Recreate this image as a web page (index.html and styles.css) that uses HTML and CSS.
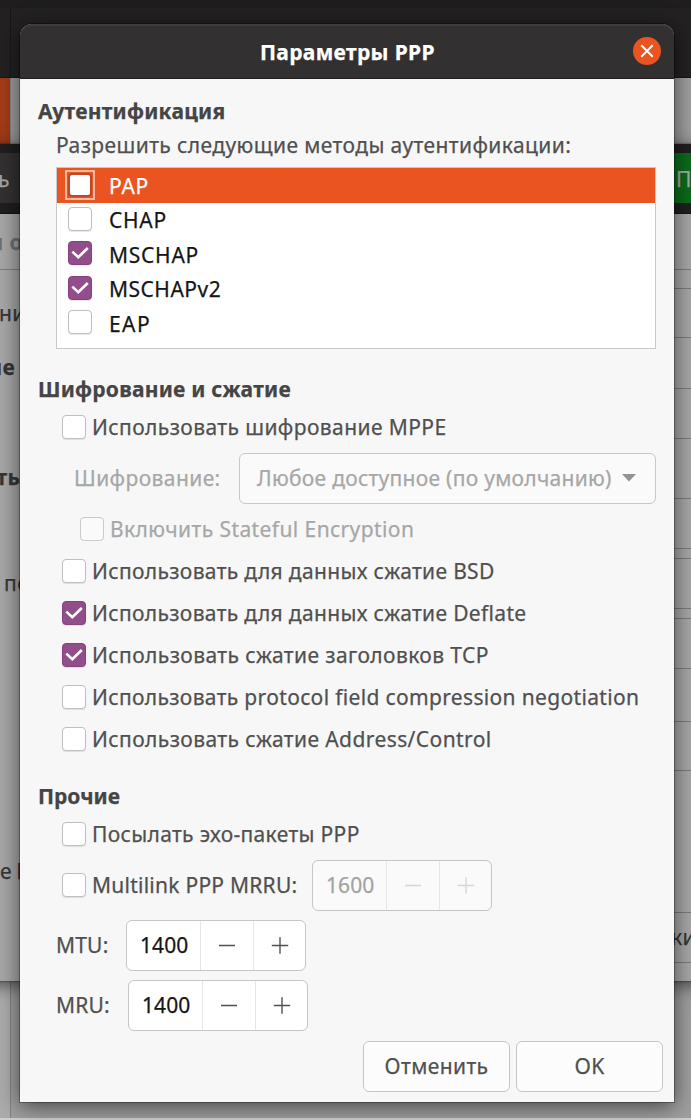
FILE: index.html
```
<!DOCTYPE html>
<html lang="ru">
<head>
<meta charset="utf-8">
<title>Параметры PPP</title>
<link rel="stylesheet" href="styles.css">
</head>
<body>
<svg class="defs" aria-hidden="true">
  <symbol id="tick" viewBox="0 0 24 24"><path d="M4.3 10.6 10.3 16.2 19.8 7" fill="none" stroke="#fff" stroke-width="2.6"/></symbol>
  <symbol id="minus" viewBox="0 0 18 18"><path d="M1 9.5H17" stroke="currentColor" stroke-width="1.4"/></symbol>
  <symbol id="plus" viewBox="0 0 18 18"><path d="M.8 9.5H17.2M9 1.3V17.7" stroke="currentColor" stroke-width="1.4"/></symbol>
</svg>
<div class="desktop">
  <div class="base">
    <div class="topbar"></div>
    <div class="base-head"><div class="base-head-left"></div></div>
    <div class="base-body">
      <div class="sidebar"><div class="selected"></div></div>
      <div class="base-content"></div>
    </div>
  </div>

  <div class="parent">
    <div class="parent-head">
      <div class="parent-cancel">ь</div>
      <div class="parent-apply">П</div>
    </div>
    <div class="parent-body">
      <div class="parent-left">
        <div class="tab">и о</div>
        <div class="bg-ni">ни</div>
        <div class="bg-ie"><b>ие</b></div>
        <div class="bg-it"><b>ить</b></div>
        <div class="bg-po">по</div>
        <div class="bg-el">е L</div>
      </div>
      <div class="parent-right">
        <div class="edge e1"></div>
        <div class="edge e2"></div>
        <div class="edge e3"></div>
        <div class="edge e4"></div>
        <div class="edge e5"></div>
        <div class="edge e6"></div>
        <div class="edge e7"></div>
        <div class="edge e8"></div>
        <div class="edge e9"></div>
        <div class="edge e10"></div>
        <div class="edge e11"></div>
        <div class="edge e12">ки</div>
      </div>
    </div>
  </div>

  <div class="dialog">
    <div class="titlebar">
      <div class="title">Параметры PPP</div>
      <svg class="close" viewBox="0 0 28 28"><circle cx="14" cy="14" r="14" fill="#e95420"/><path d="M8.3 8.3 19.7 19.7M19.7 8.3 8.3 19.7" stroke="#fff" stroke-width="2"/></svg>
    </div>
    <div class="content">
      <h2 class="h-auth">Аутентификация</h2>
      <div class="note">Разрешить следующие методы аутентификации:</div>
      <div class="list">
        <div class="item active"><span class="focus"><span class="box"></span></span><span class="name">PAP</span></div>
        <div class="item"><span class="box"></span><span class="name">CHAP</span></div>
        <div class="item"><span class="box on"><svg><use href="#tick"/></svg></span><span class="name">MSCHAP</span></div>
        <div class="item"><span class="box on"><svg><use href="#tick"/></svg></span><span class="name v2">MSCHAPv2</span></div>
        <div class="item"><span class="box"></span><span class="name eap">EAP</span></div>
      </div>

      <h2 class="h-enc">Шифрование и сжатие</h2>
      <div class="row"><span class="box"></span><span>Использовать шифрование MPPE</span></div>
      <div class="combo-row">
        <span>Шифрование:</span>
        <div class="combo"><span>Любое доступное (по умолчанию)</span><svg viewBox="0 0 14 8"><path d="M0 0H14L7 7.5Z" fill="#929292"/></svg></div>
      </div>
      <div class="row indent disabled"><span class="box"></span><span>Включить Stateful Encryption</span></div>
      <div class="row snug"><span class="box"></span><span>Использовать для данных сжатие BSD</span></div>
      <div class="row snug"><span class="box on"><svg><use href="#tick"/></svg></span><span>Использовать для данных сжатие Deflate</span></div>
      <div class="row"><span class="box on"><svg><use href="#tick"/></svg></span><span>Использовать сжатие заголовков TCP</span></div>
      <div class="row snug"><span class="box"></span><span>Использовать protocol field compression negotiation</span></div>
      <div class="row"><span class="box"></span><span>Использовать сжатие Address/Control</span></div>

      <h2 class="h-other">Прочие</h2>
      <div class="row snug"><span class="box"></span><span>Посылать эхо-пакеты PPP</span></div>
      <div class="row mrru">
        <span class="box"></span><span class="mrru-label">Multilink PPP MRRU:</span>
        <div class="spin off"><span>1600</span><i><svg><use href="#minus"/></svg></i><i><svg><use href="#plus"/></svg></i></div>
      </div>
      <div class="spin-row mtu"><span>MTU:</span>
        <div class="spin"><span>1400</span><i><svg><use href="#minus"/></svg></i><i><svg><use href="#plus"/></svg></i></div>
      </div>
      <div class="spin-row mru"><span>MRU:</span>
        <div class="spin"><span>1400</span><i><svg><use href="#minus"/></svg></i><i><svg><use href="#plus"/></svg></i></div>
      </div>
    </div>
    <div class="actions"><div class="btn">Отменить</div><div class="btn">OK</div></div>
  </div>
</div>
</body>
</html>
```
FILE: styles.css
```
* { box-sizing: border-box; }
body {
  margin: 0;
  font: 21px/30px "Noto Sans", sans-serif;
  letter-spacing: .41px;
  color: #505050;
  white-space: nowrap;
  -webkit-text-stroke: .25px currentColor;
}
.defs { display: none; }
.desktop { position: relative; width: 691px; height: 1120px; overflow: hidden; }

/* Main application window */
.base { height: 1120px; display: flex; flex-direction: column; background: #9f9f9f; border-bottom: 2px solid #cfcfcf; }
.topbar { height: 8px; background: #1e1e1e; }
.base-head { height: 70px; background: #232122; border-bottom: 1px solid #161415; }
.base-head-left { width: 11px; height: 69px; border-right: 1px solid #191718; }
.base-body { flex: 1; display: flex; }
.sidebar { width: 11px; background: #acacac; border-right: 1px solid #838383; }
.selected { height: 66px; background: #a53c17; }
.base-content { flex: 1; }

/* Connection editor window */
.parent {
  position: absolute; left: -40px; top: 144px; width: 771px; height: 837px;
  padding: 0 40px; background: #a7a7a7;
  box-shadow: 0 0 2px rgba(0,0,0,.6), 0 4px 16px rgba(0,0,0,.55);
}
.parent-head {
  height: 70px; margin: 0 -40px; padding: 9px 0 10px;
  background: #201e1f; border-bottom: 1px solid #151515;
  display: flex; justify-content: space-between;
}
.parent-cancel { width: 80px; padding: 11px 0 0 38px; line-height: 30px; background: #333132; color: #a7a5a4; }
.parent-apply { width: 107px; padding: 11px 0 0 52px; background: #0b6b1a; color: #a7aaa7; }
.parent-body { display: flex; justify-content: space-between; color: #363636; }
.parent-left { width: 20px; overflow: hidden; }
.tab { height: 56px; padding-top: 13px; margin-left: -11px; border-bottom: 1px solid #7d7d7d; color: #6b6f74; font-weight: 700; }
.bg-ni { margin: 28px 0 0 -1px; }
.bg-ie { margin: 24px 0 0 -12px; }
.bg-it { margin: 80px 0 0 -18px; }
.bg-po { margin: 76px 0 0 4px; }
.bg-el { margin-top: 258px; letter-spacing: -.4px; }
.parent-right { width: 17px; }
.edge { border-bottom: 1px solid #7b7b7b; }
.e1 { height: 56px; }
.e2 { height: 19px; }
.e3 { height: 49px; }
.e4 { height: 51px; }
.e5 { height: 50px; }
.e6 { height: 60px; }
.e7 { height: 50px; }
.e8 { height: 10px; }
.e9 { height: 50px; }
.e10 { height: 10px; }
.e11 { height: 294px; background: linear-gradient(#7b7b7b,#7b7b7b) 0 49px/100% 1px no-repeat, linear-gradient(#7b7b7b,#7b7b7b) 0 102px/100% 1px no-repeat, linear-gradient(#7b7b7b,#7b7b7b) 0 151px/100% 1px no-repeat; }
.e12 { height: 50px; padding-top: 9px; margin-left: -3px; }

/* Dialog */
.dialog {
  position: absolute; left: 20px; top: 24px; width: 654px; height: 1078px;
  background: #f7f7f7; border-radius: 12px 12px 0 0;
  display: flex; flex-direction: column;
  box-shadow: 0 0 0 1px rgba(0,0,0,.3), 0 4px 22px rgba(0,0,0,.6);
}
.titlebar {
  height: 55px; flex: none;
  display: grid; grid-template-columns: 1fr 28px; align-items: center;
  background: #333031; border-radius: 12px 12px 0 0;
  border-bottom: 1px solid #1d1b1c; box-shadow: inset 0 2px #3e3c3d;
}
.title { padding: 2px 0 0 240px; color: #fff; font-weight: 700; letter-spacing: .33px; }
.close { width: 28px; height: 28px; margin: 0 0 0 -13px; }
.content { flex: 1; }
h2 { margin: 0; padding-left: 18px; font-size: 21px; line-height: 30px; height: 30px; letter-spacing: .24px; color: #454545; }
.h-auth { margin-top: 17px; }
.note { margin: 4px 0 0 36px; height: 37px; }
.list { margin: 0 18px 0 36px; height: 182px; background: #fff; border: 1px solid #c9c9c9; color: #161616; letter-spacing: .75px; }
.item { height: 34.5px; padding-left: 11px; display: flex; align-items: center; }
.item .name { margin-left: 16px; padding: 1px 0 0 1px; }
.item > .box { position: relative; top: -1px; }
.item.active { background: #e95420; color: #fff; padding-left: 8px; }
.active .name { margin-left: 13px; }
.focus { width: 30px; height: 30px; padding: 1px; background: #e95420; border: 2px solid #f9b9a1; display: flex; margin-bottom: 1px; }
.focus .box { border: 2px solid #c4481f; box-shadow: none; border-radius: 4px; }
.v2 { letter-spacing: .5px; }
.eap { letter-spacing: 1.4px; }
.box { flex: none; width: 24px; height: 24px; background: #fff; border: 1px solid #bfbfbf; border-radius: 4px; box-shadow: 0 1px 1px rgba(0,0,0,.1); display: flex; }
.box svg { width: 24px; height: 24px; margin: -1px; flex: none; }
.box.on { background: #924d8b; border-color: #864280; }
.h-enc { margin-top: 25px; }
.row { height: 42px; padding-left: 42px; display: flex; align-items: center; gap: 6px; }
.snug { letter-spacing: .34px; }
.h-enc + .row { margin-top: 2px; }
.combo-row { height: 60px; padding: 0 18px 0 54px; display: flex; align-items: center; justify-content: space-between; color: #a7a7a7; }
.combo { width: 417px; height: 51px; padding: 0 19px 0 17px; display: flex; align-items: center; justify-content: space-between; background: #fafafa; border: 1px solid #c8c8c8; border-radius: 6px; letter-spacing: .28px; }
.combo svg { width: 14px; height: 8px; }
.indent { padding-left: 60px; }
.disabled { color: #a7a7a7; }
.disabled .box { background: #fafafa; box-shadow: none; border-color: #cacaca; }
.h-other { margin-top: 21px; letter-spacing: 0; }
.h-other + .row { margin-top: 2px; }
.mrru { height: 60px; }
.mrru-label { width: 215px; letter-spacing: .25px; }
.spin { width: 180px; height: 51px; display: grid; grid-template-columns: 73px 53px 1fr; background: #fff; border: 1px solid #c6c6c6; border-radius: 6px; color: #161616; letter-spacing: .1px; overflow: hidden; }
.spin span { line-height: 48px; padding-left: 13px; }
.spin i { display: flex; align-items: center; justify-content: center; border-left: 1px solid #e6e6e6; color: #505050; -webkit-text-stroke: 0; }
.spin i:nth-child(2) { padding-right: 1px; }
.spin svg { width: 18px; height: 18px; }
.spin.off { margin-left: -1px; background: #fafafa; color: #a3a3a3; }
.spin.off i { color: #d6d6d6; }
.spin-row { height: 60px; padding-left: 36px; display: flex; align-items: center; letter-spacing: .2px; }
.spin-row > span { width: 70px; }
.mru > span { width: 72px; }
.actions { height: 61px; padding-right: 11px; display: flex; justify-content: flex-end; gap: 6px; }
.btn { width: 147px; height: 51px; line-height: 48px; text-align: center; background: #fcfcfc; border: 1px solid #c6c6c6; border-radius: 6px; }
```
